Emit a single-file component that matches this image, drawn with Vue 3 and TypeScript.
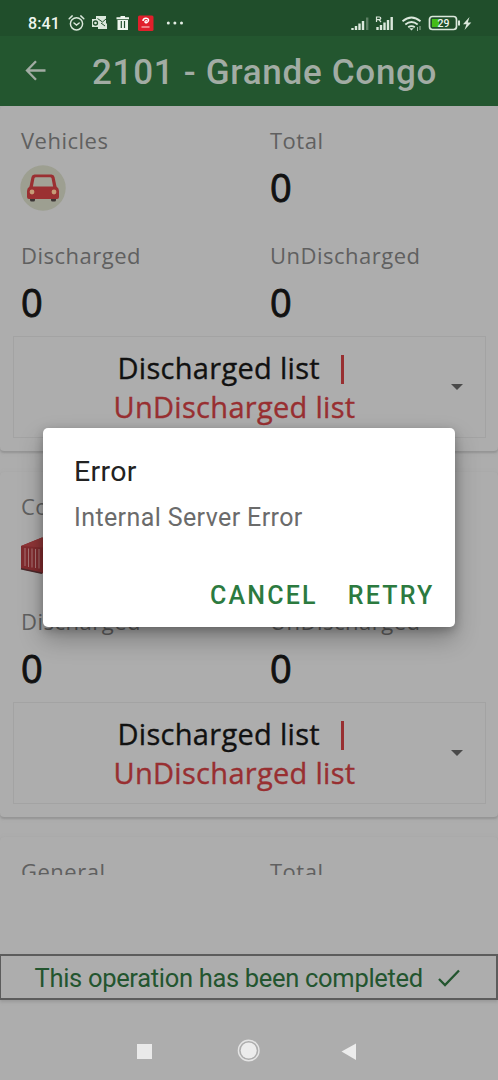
<script setup lang="ts">
interface Section {
  name: string
  icon: 'car' | 'container'
}

const sections: Section[] = [
  { name: 'Vehicles', icon: 'car' },
  { name: 'Containers', icon: 'container' },
]
</script>

<template>
  <div class="screen">
    <div class="status">
      <span class="clock">8:41</span>
      <svg class="status-left" width="120" height="20" viewBox="0 0 120 20">
        <g fill="none" stroke="#dbe8dc" stroke-width="1.5" stroke-linecap="round">
          <circle cx="8.5" cy="10.8" r="6.1" />
          <path d="M6 10l2.5 2 2.7-2M1.2 5.7l3-2.8M15.8 5.7l-3-2.8" />
        </g>
        <path d="M28 3h10v7l1 1v5h-9v-2h-6V6h4z" fill="#dbe8dc" />
        <path d="M29.500 5.500l5 3.500 3.500-3M33 10l4 3" stroke="#204e2b" fill="none" />
        <circle cx="27.500" cy="10" r="2" fill="none" stroke="#204e2b" stroke-width="1.300" />
        <path d="M48.500 4.300h4V3h4.500v1.300h4v2H48.500zM49.500 7h10.500v10H49.500z" fill="#eef5ee" />
        <path d="M53.300 8v7M56.500 8v7" stroke="#204e2b" stroke-width="1.200" />
        <rect x="70" y="2.500" width="15.500" height="15.500" rx="1.500" fill="#e01f2b" />
        <path d="M75 8c0-4 6-3.500 5.500-.5-.3 2-3 3-3.500 1.500-.2-1 1.500-1.500 2-1" fill="none" stroke="#fff" stroke-width="1.500" />
        <path d="M73.500 14h8" stroke="#f7b4b5" stroke-width="1.300" />
        <g fill="#e4eee5"><circle cx="100.300" cy="10" r="1.500" /><circle cx="106.900" cy="10" r="1.500" /><circle cx="113.500" cy="10" r="1.500" /></g>
      </svg>
      <svg class="status-right" width="124" height="20" viewBox="0 0 124 20">
        <g stroke="#dbe8dc" stroke-width="2.400">
          <path d="M1.500 17v-2M5 17v-4M8.500 17v-6.500M12 17V8" />
          <path d="M16.200 17V4.500" stroke="#5d7f64" />
          <path d="M26.500 17v-3M30 17v-5M33.500 17V9.500M37 17V7M40.700 17V4" />
        </g>
        <path d="M25.500 9V4h2.800q1.500 0 1.500 1.300T28 6.700h-2M28 6.700L30 9" fill="none" stroke="#dbe8dc" stroke-width="1.200" />
        <g fill="none" stroke="#dbe8dc" stroke-width="1.800">
          <path d="M51.500 8.300q9-7.500 18 0M54.300 11.500q6.200-5 12.400 0M57.200 14.300q3.300-2.500 6.600 0" />
        </g>
        <path d="M58.300 15.200h4.400l-2.200 2.400z" fill="#dbe8dc" />
        <path d="M66.500 14v4M69 13v4" stroke="#9fb8a3" stroke-width="1" />
        <rect x="78.500" y="3.500" width="27" height="13" rx="3" fill="none" stroke="#dbe8dc" stroke-width="1.700" />
        <rect x="81" y="6" width="7" height="8" fill="#44bd18" />
        <path d="M108 7.500v5" stroke="#dbe8dc" stroke-width="2" />
        <path d="M118.500 4l-6.500 7.300h3.500L113.500 17l6.800-7.500h-3.500z" fill="#dbe8dc" />
        <text x="92.500" y="14" class="battery">29</text>
      </svg>
    </div>

    <header class="bar">
      <svg class="back" width="24" height="24" viewBox="0 0 24 24">
        <path d="M21.500 11.500H3.500M12 2.300L3 11.500l9 9.200" fill="none" stroke="#a2aca4" stroke-width="2.300" />
      </svg>
      <h1>2101 - Grande Congo</h1>
    </header>

    <main class="list">
      <section v-for="s in sections" :key="s.name" class="card">
        <div class="grid">
          <div class="cell">
            <span class="label">{{ s.name }}</span>
            <svg v-if="s.icon === 'car'" class="icon" width="46" height="46" viewBox="0 0 46 46">
              <circle cx="23" cy="23" r="22.700" fill="#9d9f91" />
              <rect x="10" y="30" width="5" height="6.500" rx="1.500" fill="#3b3535" />
              <rect x="31" y="30" width="5" height="6.500" rx="1.500" fill="#3b3535" />
              <path d="M14.500 9.500h17q2.500 0 3 2.500l2 9.500q2.500 1.500 2.500 4.500v6q0 2-2 2H9q-2 0-2-2v-6q0-3 2.500-4.500l2-9.500q.5-2.500 3-2.500z" fill="#9b3032" />
              <path d="M16 12.200h14q1.300 0 1.600 1.300l1.500 8H12.900l1.500-8q.3-1.300 1.600-1.300z" fill="#a2a296" />
              <circle cx="12" cy="27" r="2.400" fill="#c69b77" />
              <circle cx="34" cy="27" r="2.400" fill="#c69b77" />
            </svg>
            <svg v-else class="icon" width="46" height="46" viewBox="0 0 46 46">
              <path d="M1 16L22 7.500l22 5v25L22 43.500 1 39z" fill="#812b2e" />
              <path d="M1 16L22 7.500l22 5-22 5z" fill="#8f3537" />
              <path d="M5 18v18M8.500 18.500v18.500M12 18.500v19M15.500 19v19M19 19v19.500" stroke="#a87676" stroke-width="1" />
              <path d="M1 38.800l21 4.500" stroke="#4a292b" stroke-width="1.500" />
            </svg>
          </div>
          <div class="cell">
            <span class="label">Total</span>
            <span class="value">0</span>
          </div>
          <div class="cell">
            <span class="label">Discharged</span>
            <span class="value">0</span>
          </div>
          <div class="cell">
            <span class="label">UnDischarged</span>
            <span class="value">0</span>
          </div>
        </div>
        <div class="select">
          <div class="choice">
            <div class="line"><span>Discharged list</span><i class="divider"></i></div>
            <div class="line red"><span>UnDischarged list</span></div>
          </div>
          <i class="caret"></i>
        </div>
      </section>
      <section class="card">
        <div class="grid">
          <div class="cell"><span class="label">General</span></div>
          <div class="cell"><span class="label">Total</span></div>
        </div>
      </section>
    </main>

    <footer class="done">
      <span>This operation has been completed</span>
      <svg width="22" height="18" viewBox="0 0 22 18">
        <path d="M1 10l6 6L21 1.500" fill="none" stroke="#23552f" stroke-width="2.300" />
      </svg>
    </footer>

    <nav class="nav">
      <svg width="220" height="26" viewBox="0 0 220 26">
        <rect x="1" y="6" width="15" height="15" fill="#e9e9e9" />
        <circle cx="112.700" cy="12.500" r="10.300" fill="none" stroke="#e4e4e4" stroke-width="1.400" />
        <circle cx="112.700" cy="12.500" r="8" fill="#ececec" />
        <path d="M205.500 13.500L220 5.500v16.500z" fill="#ececec" />
      </svg>
    </nav>

    <div class="dialog" role="dialog">
      <h2>Error</h2>
      <p>Internal Server Error</p>
      <div class="actions">
        <button class="cancel">CANCEL</button>
        <button class="retry">RETRY</button>
      </div>
    </div>
  </div>
</template>

<style>
body {
  margin: 0;
  background: #adadad;
}
</style>

<style scoped>
.screen {
  position: relative;
  width: 498px;
  height: 1080px;
  overflow: hidden;
  background: #adadad;
  font-family: "Open Sans", "Noto Sans", sans-serif;
  display: flex;
  flex-direction: column;
}
.status {
  height: 36px;
  flex: none;
  background: #204e2b;
  display: flex;
  align-items: center;
  padding: 11px 23px 0 28px;
  box-sizing: border-box;
}
.clock {
  font: 500 16px/20px Roboto, sans-serif;
  color: #eef5ee;
  letter-spacing: 0.1px;
  width: 40px;
}
.status-left {
  margin-top: -1px;
}
.status-right {
  margin: -1px 0 0 auto;
  overflow: visible;
}
.battery {
  font: 500 10.5px Roboto, sans-serif;
  fill: #eef5ee;
  text-anchor: middle;
}
.bar {
  height: 69.5px;
  margin-bottom: 0.5px;
  flex: none;
  background: #23562f;
  display: flex;
  align-items: center;
  padding-left: 24px;
}
h1 {
  margin: 4px 0 0 44px;
  font: 500 35px/44px Roboto, sans-serif;
  color: #a2aca4;
  letter-spacing: 0.7px;
  white-space: nowrap;
}
.list {
  height: 769px;
  flex: none;
  overflow: hidden;
}
.card {
  height: 345px;
  margin-bottom: 20.5px;
  box-sizing: border-box;
  padding-top: 19px;
  border-radius: 4px;
  box-shadow: 0 2px 2px #959595, 0 1px 4px #a3a3a3;
}
.grid {
  display: grid;
  grid-template-columns: 249px 228px;
  grid-template-rows: 115px 96px;
  padding-left: 21px;
}
.cell {
  display: flex;
  flex-direction: column;
  align-items: flex-start;
}
.label {
  font-size: 22px;
  line-height: 30px;
  letter-spacing: 0.5px;
  color: #606060;
}
.value {
  margin-top: 6px;
  font-size: 38px;
  line-height: 52px;
  font-weight: 400;
  -webkit-text-stroke: 0.9px #111;
  color: #111;
}
.icon {
  margin: 9.5px 0 0 -1px;
}
.select {
  height: 102px;
  margin: 0 12.5px;
  box-sizing: border-box;
  border: 1.5px solid #a3a3a3;
  display: flex;
  align-items: center;
}
.choice {
  width: 243px;
  margin-left: 100px;
  font-size: 29px;
  line-height: 39px;
  letter-spacing: 0.3px;
  -webkit-text-stroke: 0.35px currentColor;
  color: #111;
  white-space: nowrap;
}
.line {
  display: flex;
  align-items: center;
}
.line:first-child {
  padding-left: 4px;
}
.red {
  color: #982f31;
}
.divider {
  width: 3px;
  height: 29px;
  margin: 4px 0 0 21.5px;
  background: #982f31;
}
.caret {
  margin-left: 94px;
  border: 6px solid transparent;
  border-top-color: #4b4b4b;
  border-bottom: 0;
}
.done {
  height: 46px;
  margin-top: 79px;
  flex: none;
  box-sizing: border-box;
  border: 2px solid #5c5c5c;
  border-left-width: 1px;
  padding: 1px 0 0 33.5px;
  display: flex;
  align-items: center;
  gap: 15px;
  box-shadow: 0 2px 3px #989898;
  font: 400 25.5px/40px Roboto, sans-serif;
  letter-spacing: -0.31px;
  color: #23552f;
  white-space: nowrap;
}
.nav {
  height: 80px;
  flex: none;
  padding: 37.5px 0 0 136px;
  box-sizing: border-box;
}
.dialog {
  position: absolute;
  left: 43px;
  top: 428px;
  width: 412px;
  height: 199px;
  box-sizing: border-box;
  padding: 26px 20.5px 0 31px;
  border-radius: 5px;
  background: #fff;
  box-shadow: 0 12px 24px rgba(0, 0, 0, 0.28), 0 3px 10px rgba(0, 0, 0, 0.24);
  font-family: Roboto, sans-serif;
}
h2 {
  margin: 0;
  font-size: 28.5px;
  line-height: 36px;
  letter-spacing: 0.3px;
  font-weight: 400;
  color: #222;
}
p {
  margin: 12px 0 0;
  font-size: 25px;
  line-height: 32px;
  letter-spacing: 0.39px;
  color: #6b6b6b;
  white-space: nowrap;
}
.actions {
  display: flex;
  justify-content: flex-end;
  gap: 30px;
  margin-top: 46px;
}
button {
  border: 0;
  padding: 0;
  background: none;
  font: 500 25px/32px Roboto, sans-serif;
  letter-spacing: 2.2px;
  color: #2c7a3f;
}
</style>
